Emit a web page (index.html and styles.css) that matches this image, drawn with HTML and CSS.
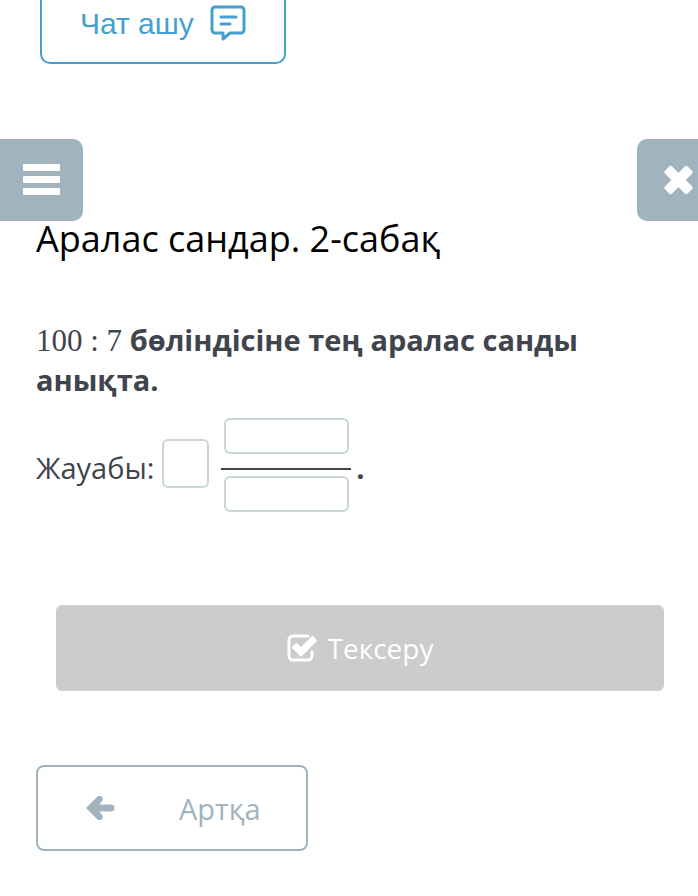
FILE: index.html
```html
<!DOCTYPE html>
<html lang="kk">
<head>
    <meta charset="UTF-8">
    <meta name="viewport" content="width=device-width, initial-scale=1.0">
    <title>Аралас сандар. 2-сабақ</title>
    <link rel="stylesheet" href="styles.css">
</head>
<body>
    <button type="button" class="chat-button">
        Чат ашу
        <svg class="chat-icon" viewBox="0 0 36 38" aria-hidden="true">
            <path d="M5 3h26a3 3 0 0 1 3 3v20a3 3 0 0 1-3 3H20l-7 6v-6H5a3 3 0 0 1-3-3V6a3 3 0 0 1 3-3z"/>
            <path d="M11 13h15M11 20h9"/>
        </svg>
    </button>

    <nav class="toolbar">
        <button type="button" class="tool-button menu-button" aria-label="Мәзір">
            <svg width="37" height="32" viewBox="0 0 37 32">
                <rect width="37" height="7" rx="1"/>
                <rect y="12" width="37" height="7" rx="1"/>
                <rect y="24" width="37" height="7" rx="1"/>
            </svg>
        </button>
        <button type="button" class="tool-button close-button" aria-label="Жабу">
            <svg width="29" height="30" viewBox="-14.500 -15 29 30">
                <rect x="-16" y="-5" width="32" height="10" rx="2" transform="rotate(45)"/>
                <rect x="-16" y="-5" width="32" height="10" rx="2" transform="rotate(-45)"/>
            </svg>
        </button>
    </nav>

    <main class="lesson">
        <h1>Аралас сандар. 2-сабақ</h1>
        <p class="question"><span class="math">100 : 7</span> <strong>бөліндісіне тең аралас санды анықта.</strong></p>

        <form>
            <div class="answer">
                <label for="whole">Жауабы:</label>
                <input type="text" id="whole" class="whole">
                <div class="fraction">
                    <input type="text" aria-label="Алымы">
                    <div class="fraction-line"></div>
                    <input type="text" aria-label="Бөлімі">
                </div>
                <span class="period">.</span>
            </div>

            <button type="submit" class="check-button">
                <svg width="31" height="28" viewBox="0 0 31 28" aria-hidden="true">
                    <path class="box" d="M21 2H6a4 4 0 0 0-4 4v16a4 4 0 0 0 4 4h15a4 4 0 0 0 4-4v-4"/>
                    <path class="tick" d="M7 11l7 7L28 4"/>
                </svg>
                Тексеру
            </button>
        </form>

        <button type="button" class="back-button">
            <svg width="29" height="24" viewBox="0 0 29 24" aria-hidden="true">
                <path class="head" d="M0 12L11 1a3 3 0 0 1 5 4L13 9v6l3 4a3 3 0 0 1-5 4z"/>
                <path class="shaft" d="M7 12h18"/>
            </svg>
            Артқа
        </button>
    </main>
</body>
</html>
```

FILE: styles.css
```css
:root {
    --chat-color: #459fd0;
    --muted-color: #a0b3bf;
    --field-color: #c9d5d9;
    --text-color: #40444c;
}
* {
    box-sizing: border-box;
}
body {
    margin: 0;
    background-color: #fff;
    color: var(--text-color);
    font-family: "Open Sans", "Noto Sans", sans-serif;
    font-size: 29px;
}
button {
    font-family: inherit;
    font-size: 29px;
    cursor: pointer;
}
svg {
    flex: none;
}
.chat-button {
    display: flex;
    align-items: flex-start;
    gap: 16px;
    height: 64px;
    margin-left: 40px;
    padding: 4px 38px 0;
    border: 2px solid var(--chat-color);
    border-top: none;
    border-radius: 0 0 10px 10px;
    background-color: #fff;
    color: var(--chat-color);
    font-family: "Liberation Sans", Arial, sans-serif;
    font-size: 30px;
    line-height: 40px;
}
.chat-icon {
    width: 36px;
    height: 38px;
    fill: none;
    stroke: currentColor;
    stroke-width: 3;
    stroke-linecap: round;
    stroke-linejoin: round;
}
.toolbar {
    display: flex;
    justify-content: space-between;
    margin-top: 75px;
}
.tool-button {
    display: flex;
    align-items: center;
    height: 82px;
    border: none;
    background-color: var(--muted-color);
    fill: #fff;
}
.menu-button {
    padding: 0 23px;
    border-radius: 0 10px 10px 0;
}
.close-button {
    padding: 0 5px 0 27px;
    border-radius: 10px 0 0 10px;
}
.lesson {
    padding: 0 36px 44px;
}
h1 {
    margin: 0 0 63px;
    color: #000;
    font-size: 36px;
    font-weight: 400;
    line-height: 36px;
}
.question {
    margin: 0 0 19px;
    line-height: 39px;
}
.math {
    font-family: "Liberation Serif", serif;
    font-size: 31px;
}
.answer {
    display: flex;
    align-items: center;
}
label {
    padding-top: 4px;
}
input {
    padding: 0 8px;
    border: 2px solid var(--field-color);
    border-radius: 6px;
    background-color: #fff;
    color: var(--text-color);
    font-family: inherit;
    font-size: 20px;
}
.whole {
    width: 47px;
    height: 49px;
    margin: 0 12px 4px 8px;
}
.fraction {
    display: flex;
    flex-direction: column;
    align-items: center;
    width: 130px;
}
.fraction input {
    width: 125px;
    height: 36px;
}
.fraction-line {
    width: 100%;
    height: 2px;
    margin: 14px 0 6px;
    background-color: var(--text-color);
}
.period {
    padding-top: 4px;
    margin-left: 5px;
    font-weight: 700;
}
.check-button {
    display: flex;
    align-items: center;
    justify-content: center;
    gap: 10px;
    width: calc(100% - 18px);
    height: 86px;
    margin: 93px 0 74px 20px;
    border: none;
    border-radius: 6px;
    background-color: #ccc;
    color: #fff;
    font-size: 28px;
}
.check-button svg {
    fill: none;
    stroke: #fff;
}
.box {
    stroke-width: 3;
    stroke-linecap: round;
}
.tick {
    stroke-width: 7;
}
.back-button {
    display: flex;
    align-items: center;
    gap: 64px;
    height: 86px;
    padding: 0 45px 0 48px;
    border: 2px solid var(--muted-color);
    border-radius: 8px;
    background-color: #fff;
    color: var(--muted-color);
}
.head {
    fill: currentColor;
}
.shaft {
    stroke: currentColor;
    stroke-width: 7;
    stroke-linecap: round;
}
```
